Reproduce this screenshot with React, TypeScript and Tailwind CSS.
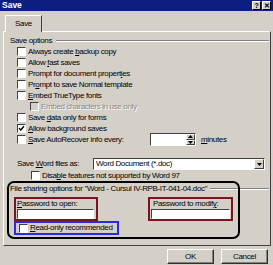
import type { ReactNode } from 'react'

function Check({ checked, disabled }: { checked?: boolean; disabled?: boolean }) {
  return (
    <span
      className={`flex h-[9px] w-[9px] shrink-0 items-center justify-center border border-t-[#404040] border-l-[#404040] border-b-white border-r-white ${
        disabled ? 'bg-[#d4d0c8]' : 'bg-white'
      }`}
    >
      {checked && (
        <svg width="7" height="7" viewBox="0 0 7 7">
          <path d="M1 3.2 L2.8 5 L6 1.2" fill="none" stroke="#000" strokeWidth="1.4" />
        </svg>
      )}
    </span>
  )
}

function Row({ pad, children, checked, disabled }: { pad: string; children: ReactNode; checked?: boolean; disabled?: boolean }) {
  return (
    <div className={`flex h-[11px] items-center gap-[2px] ${pad}`}>
      <Check checked={checked} disabled={disabled} />
      <span className={disabled ? 'text-[#8a8a8a] [text-shadow:1px_1px_0_#fff]' : ''}>{children}</span>
    </div>
  )
}

function Groove() {
  return <div className="h-[2px] flex-1 border-t border-b border-t-[#808080] border-b-white" />
}

function Button({ children }: { children: ReactNode }) {
  return (
    <div className="flex h-[15px] w-[47px] items-center justify-center border border-t-white border-l-white border-b-[#303030] border-r-[#303030] shadow-[inset_-1px_-1px_0_#808080]">
      {children}
    </div>
  )
}

export default function App() {
  return (
    <div className="flex h-[265px] w-[273px] flex-col overflow-hidden whitespace-nowrap bg-[#d4d0c8] font-['Liberation_Sans',Arial,sans-serif] text-[8px] leading-none tracking-[-0.35px] text-black">
      {/* title bar */}
      <div className="flex h-[11px] items-center justify-between bg-[#0c1f80] pl-[2px] pr-[2px]">
        <span className="text-[8.5px] font-bold tracking-normal text-white">Save</span>
        <div className="flex gap-[1px]">
          <span className="flex h-[9px] w-[9px] items-center justify-center border border-t-white border-l-white border-b-black border-r-black bg-[#d4d0c8] text-[7px] font-bold">?</span>
          <span className="flex h-[9px] w-[9px] items-center justify-center border border-t-white border-l-white border-b-black border-r-black bg-[#d4d0c8] text-[7px] font-bold">✕</span>
        </div>
      </div>

      {/* tab */}
      <div className="mt-[4px] flex pl-[5px]">
        <div className="relative z-10 -mb-[1px] flex h-[17px] w-[37px] items-center justify-center border-l border-t border-r border-l-white border-t-white border-r-[#404040] bg-[#d4d0c8]">
          Save
        </div>
      </div>

      {/* panel */}
      <div className="ml-[3px] flex h-[215px] w-[268px] flex-col border border-t-white border-l-white border-b-[#404040] border-r-[#404040]">
        <div className="mt-[4px] flex h-[9px] items-center gap-[4px] pl-[6px] pr-[1px]">
          <span>Save options</span>
          <Groove />
        </div>

        <div className="mt-[1px] flex flex-col">
          <Row pad="pl-[13px]">Always create <u>b</u>ackup copy</Row>
          <Row pad="pl-[13px]">Allow <u>f</u>ast saves</Row>
          <Row pad="pl-[13px]">Prompt for document propert<u>i</u>es</Row>
          <Row pad="pl-[13px]">Pr<u>o</u>mpt to save Normal template</Row>
          <Row pad="pl-[13px]"><u>E</u>mbed TrueType fonts</Row>
          <Row pad="pl-[26px]" disabled>Embed characters in use only</Row>
          <Row pad="pl-[13px]">Save <u>d</u>ata only for forms</Row>
          <Row pad="pl-[13px]" checked><u>A</u>llow background saves</Row>
          <div className="flex h-[11px] items-center pl-[13px]">
            <Check />
            <span className="ml-[2px] w-[122px]"><u>S</u>ave AutoRecover info every:</span>
            <div className="flex h-[13px] w-[46px] items-center justify-end border border-t-[#404040] border-l-[#404040] border-b-white border-r-white bg-white">
              <div className="flex h-[11px] w-[9px] flex-col">
                <span className="flex h-[5.5px] items-center justify-center border border-t-white border-l-white border-b-[#404040] border-r-[#404040] bg-[#d4d0c8]">
                  <svg width="5" height="3" viewBox="0 0 5 3"><path d="M0 3 L2.5 0 L5 3 Z" fill="#000" /></svg>
                </span>
                <span className="flex h-[5.5px] items-center justify-center border border-t-white border-l-white border-b-[#404040] border-r-[#404040] bg-[#d4d0c8]">
                  <svg width="5" height="3" viewBox="0 0 5 3"><path d="M0 0 L2.5 3 L5 0 Z" fill="#000" /></svg>
                </span>
              </div>
            </div>
            <span className="ml-[5px]"><u>m</u>inutes</span>
          </div>
        </div>

        <div className="mt-[13px] flex h-[12px] items-center pl-[13px]">
          <span className="w-[76px]">Save <u>W</u>ord files as:</span>
          <div className="flex h-[12px] w-[172px] items-center justify-between border border-t-[#404040] border-l-[#404040] border-b-white border-r-white bg-white pl-[2px]">
            <span>Word Document (*.doc)</span>
            <span className="flex h-[10px] w-[10px] items-center justify-center border border-t-white border-l-white border-b-[#404040] border-r-[#404040] bg-[#d4d0c8]">
              <svg width="5" height="3" viewBox="0 0 5 3"><path d="M0 0 L2.5 3 L5 0 Z" fill="#000" /></svg>
            </span>
          </div>
        </div>

        <Row pad="pl-[27px]">Disa<u>b</u>le features not supported by Word 97</Row>

        {/* file sharing */}
        <div className="relative flex h-[58px] flex-col">
          <div className="pointer-events-none absolute left-[3px] top-0 h-[58px] w-[233px] rounded-[7px] border-2 border-black" />
          <div className="mt-[3px] flex h-[9px] items-center gap-[3px] pl-[6px] pr-[1px]">
            <span>File sharing options for "Word - Cursul IV-RPB-IT-041-04.doc"</span>
            <Groove />
          </div>
          <div className="mt-[4px] flex pl-[10px]">
            <div className="flex h-[24px] w-[84px] flex-col border-2 border-[#7a1420] pl-[1px] pt-[1px]">
              <span className="h-[8px]"><u>P</u>assword to open:</span>
              <div className="mt-[1px] h-[11px] w-[77px] border border-t-[#404040] border-l-[#404040] border-b-white border-r-white bg-white" />
            </div>
            <div className="ml-[50px] flex h-[24px] w-[85px] flex-col border-2 border-[#7a1420] pl-[1px] pt-[1px]">
              <span className="h-[8px] pl-[2px]">Password to modif<u>y</u>:</span>
              <div className="mt-[1px] h-[11px] w-[79px] border border-t-[#404040] border-l-[#404040] border-b-white border-r-white bg-white" />
            </div>
          </div>
          <div className="ml-[10px] flex h-[14px] w-[105px] items-center gap-[2px] border-2 border-[#2a2ae0] pl-[3px]">
            <Check />
            <span><u>R</u>ead-only recommended</span>
          </div>
        </div>
      </div>

      {/* buttons */}
      <div className="mt-[3px] flex justify-end gap-[7px] pr-[5px]">
        <Button>OK</Button>
        <Button>Cancel</Button>
      </div>
    </div>
  )
}
